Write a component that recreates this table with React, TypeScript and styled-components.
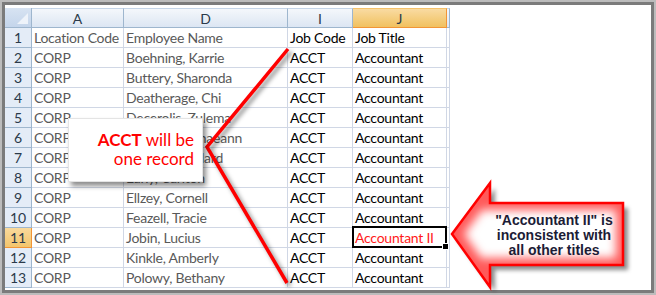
import React from 'react';
import styled, { createGlobalStyle } from 'styled-components';

const GlobalStyle = createGlobalStyle`
  body {
    margin: 0;
    background: #ffffff;
  }
  #root {
    width: 656px;
    height: 295px;
  }
`;

const COLUMNS = ['A', 'D', 'I', 'J'];

const ROWS = [
  ['Location Code', 'Employee Name', 'Job Code', 'Job Title'],
  ['CORP', 'Boehning, Karrie', 'ACCT', 'Accountant'],
  ['CORP', 'Buttery, Sharonda', 'ACCT', 'Accountant'],
  ['CORP', 'Deatherage, Chi', 'ACCT', 'Accountant'],
  ['CORP', 'Decerolis, Zulema', 'ACCT', 'Accountant'],
  ['CORP', 'Dickerson, Shaeann', 'ACCT', 'Accountant'],
  ['CORP', 'Dawson, Willard', 'ACCT', 'Accountant'],
  ['CORP', 'Early, Carlton', 'ACCT', 'Accountant'],
  ['CORP', 'Ellzey, Cornell', 'ACCT', 'Accountant'],
  ['CORP', 'Feazell, Tracie', 'ACCT', 'Accountant'],
  ['CORP', 'Jobin, Lucius', 'ACCT', 'Accountant II'],
  ['CORP', 'Kinkle, Amberly', 'ACCT', 'Accountant'],
  ['CORP', 'Polowy, Bethany', 'ACCT', 'Accountant'],
];

const ARROW = '452,234 490,183 490,203 623,203 623,265 490,265 490,287';
const ARROW_SHADOW = '457,239 495,188 495,208 628,208 628,270 495,270 495,292';
const LINES = '288,49 207,147 287,283';
const LINES_SHADOW = '291,52 210,150 290,286';

const App = () => {
  return (
    <>
      <GlobalStyle />
      <Wrapper>
        <Frame>
          <Sheet>
            <Corner />
            {COLUMNS.map((c) => (
              <ColHead key={c} $active={c === 'J'}>
                {c}
              </ColHead>
            ))}
            <ColHead $active={false} />
            {ROWS.map((row, i) => {
              const n = i + 1;
              return (
                <React.Fragment key={n}>
                  <RowHead $active={n === 11}>{n}</RowHead>
                  {row.map((text, j) => {
                    const selected = n === 11 && j === 3;
                    return (
                      <Cell
                        key={j}
                        $tone={selected ? 'red' : j < 2 ? 'grey' : 'black'}
                        $selected={selected}
                      >
                        {text}
                      </Cell>
                    );
                  })}
                  <Cell $tone="black" $selected={false} />
                </React.Fragment>
              );
            })}
          </Sheet>
        </Frame>

        <Overlay width="656" height="295" viewBox="0 0 656 295">
          <defs>
            <filter id="soft" x="-20%" y="-20%" width="140%" height="140%">
              <feGaussianBlur stdDeviation="2.2" />
            </filter>
            <filter id="glow" x="-20%" y="-20%" width="140%" height="140%">
              <feMorphology operator="erode" radius="7" />
              <feGaussianBlur stdDeviation="5" />
            </filter>
            <clipPath id="arrowClip">
              <polygon points={ARROW} />
            </clipPath>
          </defs>

          {/* lines from the callout to the job codes */}
          <polyline
            points={LINES_SHADOW}
            fill="none"
            stroke="rgba(0,0,0,0.4)"
            strokeWidth="4"
            filter="url(#soft)"
          />
          <polyline
            points={LINES}
            fill="none"
            stroke="#ff0000"
            strokeWidth="3.5"
            strokeLinejoin="miter"
          />

          {/* arrow pointing at Accountant II */}
          <polygon points={ARROW_SHADOW} fill="rgba(0,0,0,0.45)" filter="url(#soft)" />
          <polygon points={ARROW} fill="#ff5a5a" />
          <g clipPath="url(#arrowClip)">
            <polygon points={ARROW} fill="#ffffff" filter="url(#glow)" />
          </g>
          <polygon points={ARROW} fill="none" stroke="#ff0000" strokeWidth="2.5" />
        </Overlay>

        <Callout>
          <CalloutLine>
            <strong>ACCT</strong> will be
          </CalloutLine>
          <CalloutLine>one record</CalloutLine>
        </Callout>

        <ArrowText>
          "Accountant II" is
          <br />
          inconsistent with
          <br />
          all other titles
        </ArrowText>
      </Wrapper>
    </>
  );
};

const Wrapper = styled.div`
  position: relative;
  width: 656px;
  height: 295px;
  overflow: hidden;
`;

const Frame = styled.div`
  box-sizing: border-box;
  width: 656px;
  height: 295px;
  border: 2px solid #bcbcbc;
  background: #ffffff;
  box-shadow: inset 0 0 0 3px #7b7b7b;
  padding: 6px 0 0 3px;
`;

const Sheet = styled.div`
  display: grid;
  grid-template-columns: 27px 92px 164px 65px 94px 3px;
  grid-auto-rows: 20px;
  width: 445px;
  font-family: Lato, 'Liberation Sans', sans-serif;
  font-size: 14px;
`;

const Corner = styled.div`
  position: relative;
  box-sizing: border-box;
  border-right: 1px solid #9eb6ce;
  border-bottom: 1px solid #9eb6ce;
  background: linear-gradient(#d7e3f2, #c4d5eb);

  &::after {
    content: '';
    position: absolute;
    right: 3px;
    bottom: 3px;
    width: 0;
    height: 0;
    border-left: 11px solid transparent;
    border-bottom: 11px solid #eef3fa;
  }
`;

const ColHead = styled.div<{ $active: boolean }>`
  box-sizing: border-box;
  display: flex;
  align-items: center;
  justify-content: center;
  border-right: 1px solid ${(p) => (p.$active ? '#f29536' : '#9eb6ce')};
  border-bottom: 1px solid ${(p) => (p.$active ? '#f29536' : '#9eb6ce')};
  border-top: 1px solid ${(p) => (p.$active ? '#f5c16b' : '#c5d5e8')};
  background: ${(p) =>
    p.$active
      ? 'linear-gradient(#f9dba2, #f1c15f)'
      : 'linear-gradient(#f4f7fb, #dce6f3)'};
  color: #2b3a4a;
  font-size: 14px;
`;

const RowHead = styled.div<{ $active: boolean }>`
  box-sizing: border-box;
  display: flex;
  align-items: center;
  justify-content: center;
  border-right: 1px solid ${(p) => (p.$active ? '#f29536' : '#9eb6ce')};
  border-bottom: 1px solid ${(p) => (p.$active ? '#f29536' : '#9eb6ce')};
  background: ${(p) => (p.$active ? 'linear-gradient(#f9d99c, #f3c56c)' : '#e4ecf7')};
  color: #2b3a4a;
  font-size: 14px;
`;

const TONES = {
  grey: '#595959',
  black: '#000000',
  red: '#ff1a1a',
};

const Cell = styled.div<{ $tone: keyof typeof TONES; $selected: boolean }>`
  position: relative;
  box-sizing: border-box;
  padding-left: 2px;
  border-right: 1px solid #d0d7e5;
  border-bottom: 1px solid #d0d7e5;
  line-height: 19px;
  letter-spacing: -0.25px;
  white-space: nowrap;
  overflow: visible;
  color: ${(p) => TONES[p.$tone]};

  ${(p) =>
    p.$selected &&
    `
    &::after {
      content: '';
      position: absolute;
      top: -2px;
      left: -1px;
      right: -1px;
      bottom: -1px;
      border: 2px solid #000000;
    }
    &::before {
      content: '';
      position: absolute;
      right: -3px;
      bottom: -3px;
      width: 5px;
      height: 5px;
      background: #000000;
      border: 1px solid #ffffff;
      z-index: 1;
    }
  `}
`;

const Overlay = styled.svg`
  position: absolute;
  top: 0;
  left: 0;
  pointer-events: none;
`;

const Callout = styled.div`
  position: absolute;
  left: 68px;
  top: 118px;
  box-sizing: border-box;
  width: 135px;
  height: 64px;
  padding: 11px 8px 0 0;
  background: #ffffff;
  border: 1px solid #e4e4e4;
  box-shadow: 3px 4px 5px rgba(0, 0, 0, 0.45);
  display: flex;
  flex-direction: column;
  align-items: flex-end;
  font-family: Lato, 'Liberation Sans', sans-serif;
  font-size: 17px;
  line-height: 19px;
  color: #ff0000;
`;

const CalloutLine = styled.div`
  strong {
    font-weight: 700;
  }
`;

const ArrowText = styled.div`
  position: absolute;
  left: 490px;
  top: 213px;
  width: 128px;
  text-align: center;
  font-family: 'Liberation Sans', Arial, sans-serif;
  font-weight: 700;
  font-size: 14px;
  line-height: 15px;
  color: #1c1c36;
`;

export default App;
